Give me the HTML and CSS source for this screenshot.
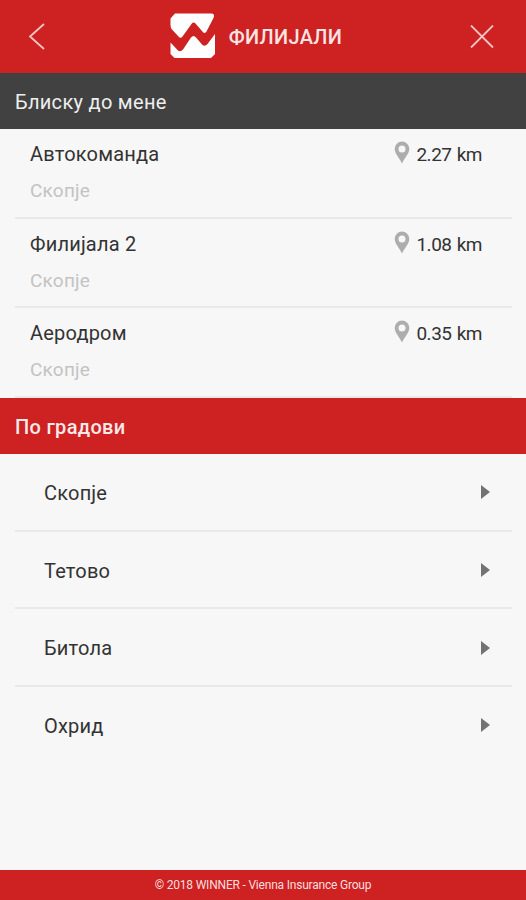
FILE: index.html
```html
<!DOCTYPE html>
<html lang="mk">
<head>
    <meta charset="UTF-8">
    <meta name="viewport" content="width=device-width, initial-scale=1.0">
    <title>Филијали</title>
    <link rel="stylesheet" href="styles.css">
</head>
<body>
    <header class="header">
        <svg class="back" width="18" height="28" viewBox="0 0 18 28">
            <path d="M16 1L2 13.500L16 26"/>
        </svg>
        <div class="brand">
            <svg class="logo" width="46" height="46" viewBox="0 0 46 46">
                <path d="M0.500 5.500L5 0.500H41Q45.500 0.500 43.500 5L36.500 18.500Q34.500 21.500 32 18L25.500 10.500Q23.500 8.500 21.500 11L12.500 23.500Q10.500 26 8.500 23.500L2 16.500Q0.500 15 0.500 12Z"/>
                <path d="M0.500 29.500L8 37.500Q10.500 39.500 13 36.500L21 24.500Q23.500 21.500 26 24.500L32.500 32Q35 34 37.500 31L45 21V41L41 45H4.500L0.500 41Z"/>
            </svg>
            <h1>ФИЛИЈАЛИ</h1>
        </div>
        <svg class="close" width="24" height="24" viewBox="0 0 24 24">
            <path d="M1 0.500L23 22.500M23 0.500L1 22.500"/>
        </svg>
    </header>

    <h2 class="section-title dark">Блиску до мене</h2>
    <ul class="branches">
        <li class="branch">
            <div class="info">
                <div class="name">Автокоманда</div>
                <div class="city">Скопје</div>
            </div>
            <div class="distance">
                <svg class="pin" width="16" height="23" viewBox="0 0 16 23"><path fill-rule="evenodd" d="M8 0.500A7.300 7.300 0 0 0 0.700 7.800C0.700 12.500 5 16.500 8 22.500C11 16.500 15.300 12.500 15.300 7.800A7.300 7.300 0 0 0 8 0.500ZM8 4.500A3.500 3.500 0 1 1 8 11.500A3.500 3.500 0 1 1 8 4.500Z"/></svg>
                <span>2.27 km</span>
            </div>
        </li>
        <li class="branch">
            <div class="info">
                <div class="name">Филијала 2</div>
                <div class="city">Скопје</div>
            </div>
            <div class="distance">
                <svg class="pin" width="16" height="23" viewBox="0 0 16 23"><path fill-rule="evenodd" d="M8 0.500A7.300 7.300 0 0 0 0.700 7.800C0.700 12.500 5 16.500 8 22.500C11 16.500 15.300 12.500 15.300 7.800A7.300 7.300 0 0 0 8 0.500ZM8 4.500A3.500 3.500 0 1 1 8 11.500A3.500 3.500 0 1 1 8 4.500Z"/></svg>
                <span>1.08 km</span>
            </div>
        </li>
        <li class="branch">
            <div class="info">
                <div class="name">Аеродром</div>
                <div class="city">Скопје</div>
            </div>
            <div class="distance">
                <svg class="pin" width="16" height="23" viewBox="0 0 16 23"><path fill-rule="evenodd" d="M8 0.500A7.300 7.300 0 0 0 0.700 7.800C0.700 12.500 5 16.500 8 22.500C11 16.500 15.300 12.500 15.300 7.800A7.300 7.300 0 0 0 8 0.500ZM8 4.500A3.500 3.500 0 1 1 8 11.500A3.500 3.500 0 1 1 8 4.500Z"/></svg>
                <span>0.35 km</span>
            </div>
        </li>
    </ul>

    <h2 class="section-title red">По градови</h2>
    <ul class="cities">
        <li><span>Скопје</span><i class="arrow"></i></li>
        <li><span>Тетово</span><i class="arrow"></i></li>
        <li><span>Битола</span><i class="arrow"></i></li>
        <li><span>Охрид</span><i class="arrow"></i></li>
    </ul>

    <footer class="footer">© 2018 WINNER - Vienna Insurance Group</footer>
</body>
</html>
```
FILE: styles.css
```css
* {
    box-sizing: border-box;
}

body {
    font-family: Roboto, "Noto Sans", sans-serif;
    font-size: 20px;
    letter-spacing: 0.2px;
    margin: 0;
    height: 900px;
    display: flex;
    flex-direction: column;
    background-color: #f7f7f7;
    color: #333;
}

ul {
    list-style: none;
    margin: 0;
    padding: 0 14px 0 15px;
}

.header {
    height: 73px;
    padding: 0 32px 0 28px;
    display: flex;
    align-items: center;
    justify-content: space-between;
    background-color: #cd2122;
}

.back,
.close {
    fill: none;
    stroke: #f6c4c4;
    stroke-width: 1.8;
}

.brand {
    margin-right: 4px;
    display: flex;
    align-items: center;
    gap: 13px;
}

.brand h1 {
    margin: 1px 0 0;
    font-size: 20px;
    font-weight: 500;
    letter-spacing: 0.3px;
    color: #fbe4e4;
}

.logo {
    margin-top: -1px;
    fill: #fff;
}

.section-title {
    margin: 0;
    height: 56px;
    padding: 0 15px;
    font-size: 20px;
    font-weight: 500;
    line-height: 58px;
}

.dark {
    background-color: #414141;
    color: #eee;
    font-weight: 400;
    letter-spacing: 0.3px;
}

.red {
    background-color: #cd2122;
    color: #fbe9e9;
    letter-spacing: 0.3px;
}

.branches {
    height: 269px;
}

.branch {
    height: 89.5px;
    padding: 12px 30px 0 15px;
    display: flex;
    justify-content: space-between;
    border-bottom: 2px solid #e9e9e9;
}

.name {
    line-height: 26px;
}

.city {
    margin-top: 10px;
    line-height: 27px;
    font-size: 19px;
    color: #c3c3c3;
}

.distance {
    display: flex;
    gap: 6px;
    height: 26px;
    line-height: 27px;
    font-size: 19px;
    letter-spacing: -0.5px;
    word-spacing: 1px;
}

.pin {
    fill: #adadad;
}

.cities {
    flex: 1;
}

.cities li {
    height: 77.7px;
    padding: 2px 22px 0 29px;
    display: flex;
    align-items: center;
    justify-content: space-between;
    border-bottom: 2px solid #e9e9e9;
}

.cities li:last-child {
    border-bottom-color: transparent;
}

.arrow {
    margin-bottom: 1px;
    border-left: 9px solid #737373;
    border-top: 7px solid transparent;
    border-bottom: 7px solid transparent;
}

.footer {
    height: 30px;
    line-height: 31px;
    text-align: center;
    font-size: 12px;
    letter-spacing: -0.2px;
    background-color: #cd2122;
    color: #fbdede;
}
```
